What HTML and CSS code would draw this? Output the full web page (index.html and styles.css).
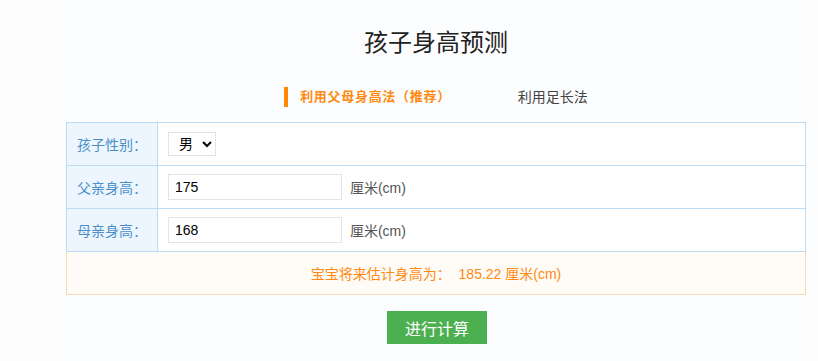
FILE: index.html
```html
<!DOCTYPE html>
<html lang="zh-CN">
<head>
  <meta charset="UTF-8">
  <meta name="viewport" content="width=device-width, initial-scale=1.0">
  <title>孩子身高预测</title>
  <link rel="stylesheet" href="styles.css">
</head>
<body>
  <div class="wrap">
    <h1>孩子身高预测</h1>

    <div class="tabs">
      <span class="tab active">利用父母身高法（推荐）</span>
      <span class="tab">利用足长法</span>
    </div>

    <table class="calc">
      <tr>
        <th>孩子性别：</th>
        <td>
          <select class="sex">
            <option>男</option>
            <option>女</option>
          </select>
        </td>
      </tr>
      <tr>
        <th>父亲身高：</th>
        <td><input type="text" class="num" value="175"> <span class="unit">厘米(cm)</span></td>
      </tr>
      <tr>
        <th>母亲身高：</th>
        <td><input type="text" class="num" value="168"> <span class="unit">厘米(cm)</span></td>
      </tr>
      <tr class="result-row">
        <td colspan="2">宝宝将来估计身高为： <span class="value">185.22</span> 厘米(cm)</td>
      </tr>
    </table>

    <div class="actions">
      <button class="btn">进行计算</button>
    </div>
  </div>
</body>
</html>
```

FILE: styles.css
```css
body {
  margin: 0;
  background-color: #fdfdfd;
  font-family: "Liberation Sans", Arial, "Noto Sans CJK SC", sans-serif;
  color: #333;
}
.wrap {
  width: 740px;
  margin-left: 66px;
  padding-bottom: 18px;
  background-color: #fcfdfe;
}
h1 {
  margin: 0;
  padding-top: 28px;
  font-size: 24px;
  line-height: 30px;
  font-weight: normal;
  text-align: center;
  color: #222;
}
.tabs {
  display: flex;
  justify-content: center;
  gap: 67px;
  margin-top: 29px;
  margin-bottom: 15px;
  line-height: 20px;
}
.tab {
  font-size: 14px;
  color: #444;
}
.tab.active {
  font-size: 13px;
  font-weight: bold;
  letter-spacing: 0.7px;
  color: #ff8a12;
  border-left: 4px solid #ff8a00;
  padding-left: 12px;
}
.calc {
  width: 100%;
  border-collapse: collapse;
  font-size: 14px;
}
.calc th,
.calc td {
  border: 1px solid #bcdcf3;
  height: 42px;
  padding: 0 10px;
  text-align: left;
}
.calc th {
  width: 70px;
  font-weight: normal;
  color: #4b8fc9;
  background-color: #edf6fe;
}
.calc td {
  background-color: #fff;
}
.sex {
  height: 24px;
  padding: 0 6px;
  font-size: 14px;
  border: 1px solid #e4e4e4;
  background-color: #fff;
  color: #000;
}
.num {
  width: 160px;
  height: 24px;
  padding: 0 6px;
  border: 1px solid #e4e4e4;
  font-size: 14px;
  font-family: "Liberation Sans", Arial, sans-serif;
  color: #000;
  vertical-align: middle;
}
.unit {
  margin-left: 4px;
  color: #555;
  vertical-align: middle;
}
.result-row td {
  text-align: center;
  color: #ff8a12;
  background-color: #fffbf6;
  border: 1px solid #f6dcb2;
}
.result-row .value {
  margin-left: 4px;
}
.actions {
  margin-top: 16px;
  text-align: center;
}
.btn {
  width: 100px;
  height: 33px;
  margin-left: 2px;
  border: none;
  background-color: #4caf50;
  color: #fff;
  font-size: 16px;
  font-family: "Liberation Sans", Arial, "Noto Sans CJK SC", sans-serif;
  cursor: pointer;
}
```
